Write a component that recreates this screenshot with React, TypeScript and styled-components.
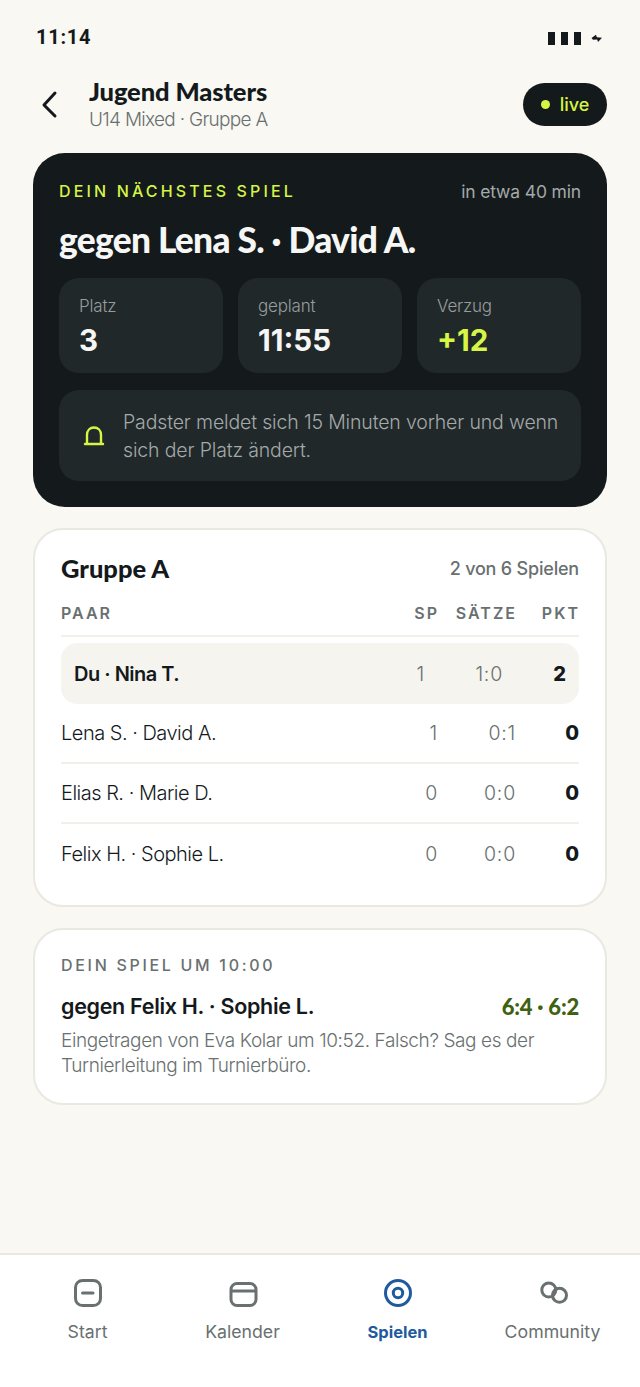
import React from 'react';
import styled, { createGlobalStyle } from 'styled-components';

const GlobalStyle = createGlobalStyle`
  html, body {
    margin: 0;
    padding: 0;
    background: #f9f8f3;
  }
  * {
    box-sizing: border-box;
  }
`;

const bodyFont = `Inter, "Liberation Sans", sans-serif`;
const headFont = `Lato, "Liberation Sans", sans-serif`;

const Screen = styled.div`
  width: 640px;
  height: 1387px;
  display: flex;
  flex-direction: column;
  background: #f9f8f3;
  font-family: ${bodyFont};
  color: #14191c;
  overflow: hidden;
`;

const Content = styled.div`
  flex: 1;
  display: flex;
  flex-direction: column;
`;

const StatusBar = styled.div`
  height: 74px;
  padding: 26px 37px 0 36px;
  display: flex;
  justify-content: space-between;
  align-items: flex-start;
`;

const Clock = styled.span`
  font-family: Roboto, "Liberation Sans", sans-serif;
  font-size: 20px;
  line-height: 22px;
  font-weight: 700;
  letter-spacing: 0.75px;
`;

const StatusIcons = styled.div`
  display: flex;
  align-items: center;
  gap: 6px;
  margin-top: 6px;
`;

const SignalBar = styled.span`
  width: 7px;
  height: 13px;
  background: #14191c;
`;

const Header = styled.header`
  height: 61px;
  margin: 0 33px;
  display: flex;
  align-items: center;
`;

const BackButton = styled.button`
  width: 56px;
  height: 40px;
  padding: 0 0 0 7px;
  border: none;
  background: none;
  color: #14191c;
  display: flex;
  align-items: center;
`;

const TitleBlock = styled.div`
  flex: 1;
  display: flex;
  flex-direction: column;
`;

const Title = styled.h1`
  margin: -1px 0 0;
  font-family: ${headFont};
  font-size: 25.5px;
  line-height: 30px;
  font-weight: 900;
  letter-spacing: -0.1px;
`;

const Subtitle = styled.div`
  margin-top: 1px;
  font-size: 19px;
  line-height: 26px;
  font-weight: 300;
  letter-spacing: -0.7px;
  color: #697070;
`;

const LivePill = styled.div`
  width: 84px;
  height: 43px;
  border-radius: 22px;
  background: #14191c;
  color: #d6f545;
  display: flex;
  align-items: center;
  justify-content: center;
  gap: 10px;
  font-size: 18px;
  font-weight: 500;
`;

const LiveDot = styled.span`
  width: 9px;
  height: 9px;
  border-radius: 50%;
  background: #d6f545;
`;

const NextCard = styled.section`
  margin: 18px 33px 0;
  height: 354px;
  padding: 24px 26px;
  border-radius: 32px;
  background: #14191c;
`;

const SpaceRow = styled.div`
  display: flex;
  justify-content: space-between;
  align-items: center;
`;

const Eyebrow = styled.span<{ $dark?: boolean }>`
  font-size: 16px;
  line-height: 28px;
  font-weight: 500;
  letter-spacing: ${props => (props.$dark ? '2.7px' : '3.15px')};
  color: ${props => (props.$dark ? '#697070' : '#d6f545')};
`;

const EtaText = styled.span`
  font-size: 17.5px;
  font-weight: 400;
  letter-spacing: -0.15px;
  color: #a4a9a9;
`;

const Opponent = styled.h2`
  margin: 13px 0 0;
  font-family: ${headFont};
  font-size: 35.3px;
  line-height: 44px;
  font-weight: 900;
  letter-spacing: -0.7px;
  color: #f6f7f5;
`;

const StatGrid = styled.div`
  margin-top: 16px;
  display: grid;
  grid-template-columns: repeat(3, 1fr);
  gap: 15px;
`;

const StatCell = styled.div`
  height: 95px;
  padding: 15px 20px;
  border-radius: 20px;
  background: #20282a;
`;

const StatLabel = styled.div`
  font-size: 17px;
  line-height: 26px;
  font-weight: 300;
  letter-spacing: -0.2px;
  color: #979d9d;
`;

const StatValue = styled.div<{ $accent?: boolean }>`
  margin-top: 4px;
  font-size: 29.5px;
  line-height: 34px;
  font-weight: 700;
  color: ${props => (props.$accent ? '#d6f545' : '#f6f7f5')};
`;

const Notice = styled.div`
  margin-top: 17px;
  height: 91px;
  padding: 0 16px 0 24px;
  border-radius: 20px;
  background: #20282a;
  display: flex;
  align-items: center;
  gap: 18px;
  color: #d6f545;
`;

const NoticeText = styled.p`
  margin: 0;
  font-size: 19.5px;
  line-height: 28px;
  font-weight: 300;
  letter-spacing: -0.15px;
  color: #a4a9a9;
`;

const WhiteCard = styled.section<{ $height: number }>`
  margin: 21px 33px 0;
  height: ${props => props.$height}px;
  border: 2px solid #e9e8e1;
  border-radius: 30px;
  background: #ffffff;
`;

const GroupCard = styled(WhiteCard)`
  padding: 19px 26px 0;
`;

const GroupTitle = styled.h3`
  margin: 0;
  font-family: ${headFont};
  font-size: 25.5px;
  line-height: 38px;
  font-weight: 900;
`;

const GroupProgress = styled.span`
  font-size: 18px;
  font-weight: 500;
  letter-spacing: -0.2px;
  color: #697070;
`;

const HeadRow = styled.div`
  margin-top: 8px;
  height: 42px;
  padding-bottom: 4px;
  display: grid;
  grid-template-columns: 1fr 40px 78px 63px;
  align-items: center;
  border-bottom: 2px solid #f0efe9;
  font-size: 16px;
  font-weight: 600;
  letter-spacing: 2px;
  color: #697070;
`;

const HeadCell = styled.span<{ $left?: boolean }>`
  text-align: ${props => (props.$left ? 'left' : 'right')};
  margin-right: -1px;
`;

const TableRow = styled.div<{ $me?: boolean; $last?: boolean }>`
  display: grid;
  grid-template-columns: 1fr 40px 78px 63px;
  align-items: center;
  height: ${props => (props.$me ? '61px' : '60px')};
  padding: 0 ${props => (props.$me ? '13px' : '0')};
  margin-top: ${props => (props.$me ? '6px' : '0')};
  border-radius: ${props => (props.$me ? '16px' : '0')};
  background: ${props => (props.$me ? '#f5f4ee' : 'transparent')};
  border-bottom: ${props => (props.$me || props.$last ? 'none' : '2px solid #f0efe9')};
`;

const PairName = styled.span<{ $me?: boolean }>`
  font-size: 20px;
  font-weight: ${props => (props.$me ? 600 : 300)};
  letter-spacing: -0.5px;
  color: #14191c;
`;

const NumCell = styled.span`
  text-align: right;
  font-size: 19.5px;
  font-weight: 300;
  letter-spacing: 0.8px;
  color: #697070;
`;

const PointCell = styled.span`
  text-align: right;
  font-size: 20px;
  font-weight: 800;
  color: #14191c;
`;

const PastCard = styled(WhiteCard)`
  padding: 21px 26px 0;
`;

const PastTitle = styled.span`
  font-size: 21.5px;
  line-height: 28px;
  font-weight: 600;
  letter-spacing: -0.3px;
`;

const PastScore = styled.span`
  font-family: ${headFont};
  font-size: 22px;
  font-weight: 900;
  letter-spacing: -0.2px;
  color: #3f6212;
`;

const PastRow = styled(SpaceRow)`
  margin-top: 13px;
`;

const PastNote = styled.p`
  margin: 8px 0 0;
  font-size: 19px;
  line-height: 25px;
  font-weight: 300;
  letter-spacing: -0.4px;
  color: #697070;
`;

const TabBar = styled.nav`
  height: 134px;
  padding: 22px 10px 0;
  border-top: 2px solid #e9e8e1;
  background: #ffffff;
  display: grid;
  grid-template-columns: repeat(4, 155px);
`;

const TabItem = styled.div<{ $active?: boolean }>`
  display: flex;
  flex-direction: column;
  align-items: center;
  gap: 11px;
  font-size: ${props => (props.$active ? '16.5px' : '17.7px')};
  line-height: 24px;
  font-weight: ${props => (props.$active ? 700 : 400)};
  color: ${props => (props.$active ? '#1f5a9e' : '#697070')};
`;

const BackIcon = () => (
  <svg width="22" height="30" viewBox="0 0 22 30" fill="none" stroke="currentColor" strokeWidth="3" strokeLinecap="round" strokeLinejoin="round">
    <path d="M15 3 L4 15 L15 26" />
  </svg>
);

const ChargeIcon = () => (
  <svg width="12" height="9" viewBox="0 0 12 9" fill="#14191c" style={{ marginLeft: 4 }}>
    <path d="M0.5 4 L5 0.8 L5.8 3.2 L11 3.8 L7 8 L6.2 5.6 L2 5.8 Z" />
  </svg>
);

const BellIcon = () => (
  <svg width="22" height="24" viewBox="0 0 22 24" fill="none" stroke="currentColor" strokeWidth="2.4" strokeLinejoin="round" strokeLinecap="round" style={{ flexShrink: 0 }}>
    <path d="M4 19 V11 C4 6.5 7 3.5 11 3.5 C15 3.5 18 6.5 18 11 V19" />
    <path d="M2 20 H20" />
  </svg>
);

const TabIcon = ({ name }: { name: string }) => (
  <svg width="32" height="32" viewBox="0 0 32 32" fill="none" stroke="currentColor" strokeWidth="3">
    {name === 'start' && (
      <>
        <rect x="3.5" y="3.5" width="25" height="25" rx="7" />
        <path d="M10.5 16 H21" strokeLinecap="round" />
      </>
    )}
    {name === 'kalender' && (
      <>
        <rect x="4" y="6.5" width="25" height="22" rx="6" />
        <path d="M4 14 H29" />
      </>
    )}
    {name === 'spielen' && (
      <>
        <circle cx="16" cy="16" r="12.5" />
        <circle cx="16" cy="16" r="4.7" />
      </>
    )}
    {name === 'community' && (
      <>
        <circle cx="11.8" cy="13" r="7" />
        <circle cx="22.5" cy="18.3" r="7" />
      </>
    )}
  </svg>
);

const rows = [
  { name: 'Lena S. · David A.', sp: '1', sets: '0:1', pts: '0' },
  { name: 'Elias R. · Marie D.', sp: '0', sets: '0:0', pts: '0' },
  { name: 'Felix H. · Sophie L.', sp: '0', sets: '0:0', pts: '0' },
];

const tabs = [
  { id: 'start', label: 'Start' },
  { id: 'kalender', label: 'Kalender' },
  { id: 'spielen', label: 'Spielen', active: true },
  { id: 'community', label: 'Community' },
];

const App: React.FC = () => {
  return (
    <Screen>
      <GlobalStyle />
      <Content>
        <StatusBar>
          <Clock>11:14</Clock>
          <StatusIcons>
            <SignalBar />
            <SignalBar />
            <SignalBar />
            <ChargeIcon />
          </StatusIcons>
        </StatusBar>

        <Header>
          <BackButton>
            <BackIcon />
          </BackButton>
          <TitleBlock>
            <Title>Jugend Masters</Title>
            <Subtitle>U14 Mixed · Gruppe A</Subtitle>
          </TitleBlock>
          <LivePill>
            <LiveDot />
            live
          </LivePill>
        </Header>

        <NextCard>
          <SpaceRow>
            <Eyebrow>DEIN NÄCHSTES SPIEL</Eyebrow>
            <EtaText>in etwa 40 min</EtaText>
          </SpaceRow>
          <Opponent>gegen Lena S. · David A.</Opponent>
          <StatGrid>
            <StatCell>
              <StatLabel>Platz</StatLabel>
              <StatValue>3</StatValue>
            </StatCell>
            <StatCell>
              <StatLabel>geplant</StatLabel>
              <StatValue>11:55</StatValue>
            </StatCell>
            <StatCell>
              <StatLabel>Verzug</StatLabel>
              <StatValue $accent>+12</StatValue>
            </StatCell>
          </StatGrid>
          <Notice>
            <BellIcon />
            <NoticeText>Padster meldet sich 15 Minuten vorher und wenn sich der Platz ändert.</NoticeText>
          </Notice>
        </NextCard>

        <GroupCard $height={379}>
          <SpaceRow>
            <GroupTitle>Gruppe A</GroupTitle>
            <GroupProgress>2 von 6 Spielen</GroupProgress>
          </SpaceRow>
          <HeadRow>
            <HeadCell $left>PAAR</HeadCell>
            <HeadCell>SP</HeadCell>
            <HeadCell>SÄTZE</HeadCell>
            <HeadCell>PKT</HeadCell>
          </HeadRow>
          <TableRow $me>
            <PairName $me>Du · Nina T.</PairName>
            <NumCell>1</NumCell>
            <NumCell>1:0</NumCell>
            <PointCell>2</PointCell>
          </TableRow>
          {rows.map((row, index) => (
            <TableRow key={row.name} $last={index === rows.length - 1}>
              <PairName>{row.name}</PairName>
              <NumCell>{row.sp}</NumCell>
              <NumCell>{row.sets}</NumCell>
              <PointCell>{row.pts}</PointCell>
            </TableRow>
          ))}
        </GroupCard>

        <PastCard $height={177}>
          <Eyebrow $dark>DEIN SPIEL UM 10:00</Eyebrow>
          <PastRow>
            <PastTitle>gegen Felix H. · Sophie L.</PastTitle>
            <PastScore>6:4 · 6:2</PastScore>
          </PastRow>
          <PastNote>Eingetragen von Eva Kolar um 10:52. Falsch? Sag es der Turnierleitung im Turnierbüro.</PastNote>
        </PastCard>
      </Content>

      <TabBar>
        {tabs.map(tab => (
          <TabItem key={tab.id} $active={tab.active}>
            <TabIcon name={tab.id} />
            {tab.label}
          </TabItem>
        ))}
      </TabBar>
    </Screen>
  );
};

export default App;
